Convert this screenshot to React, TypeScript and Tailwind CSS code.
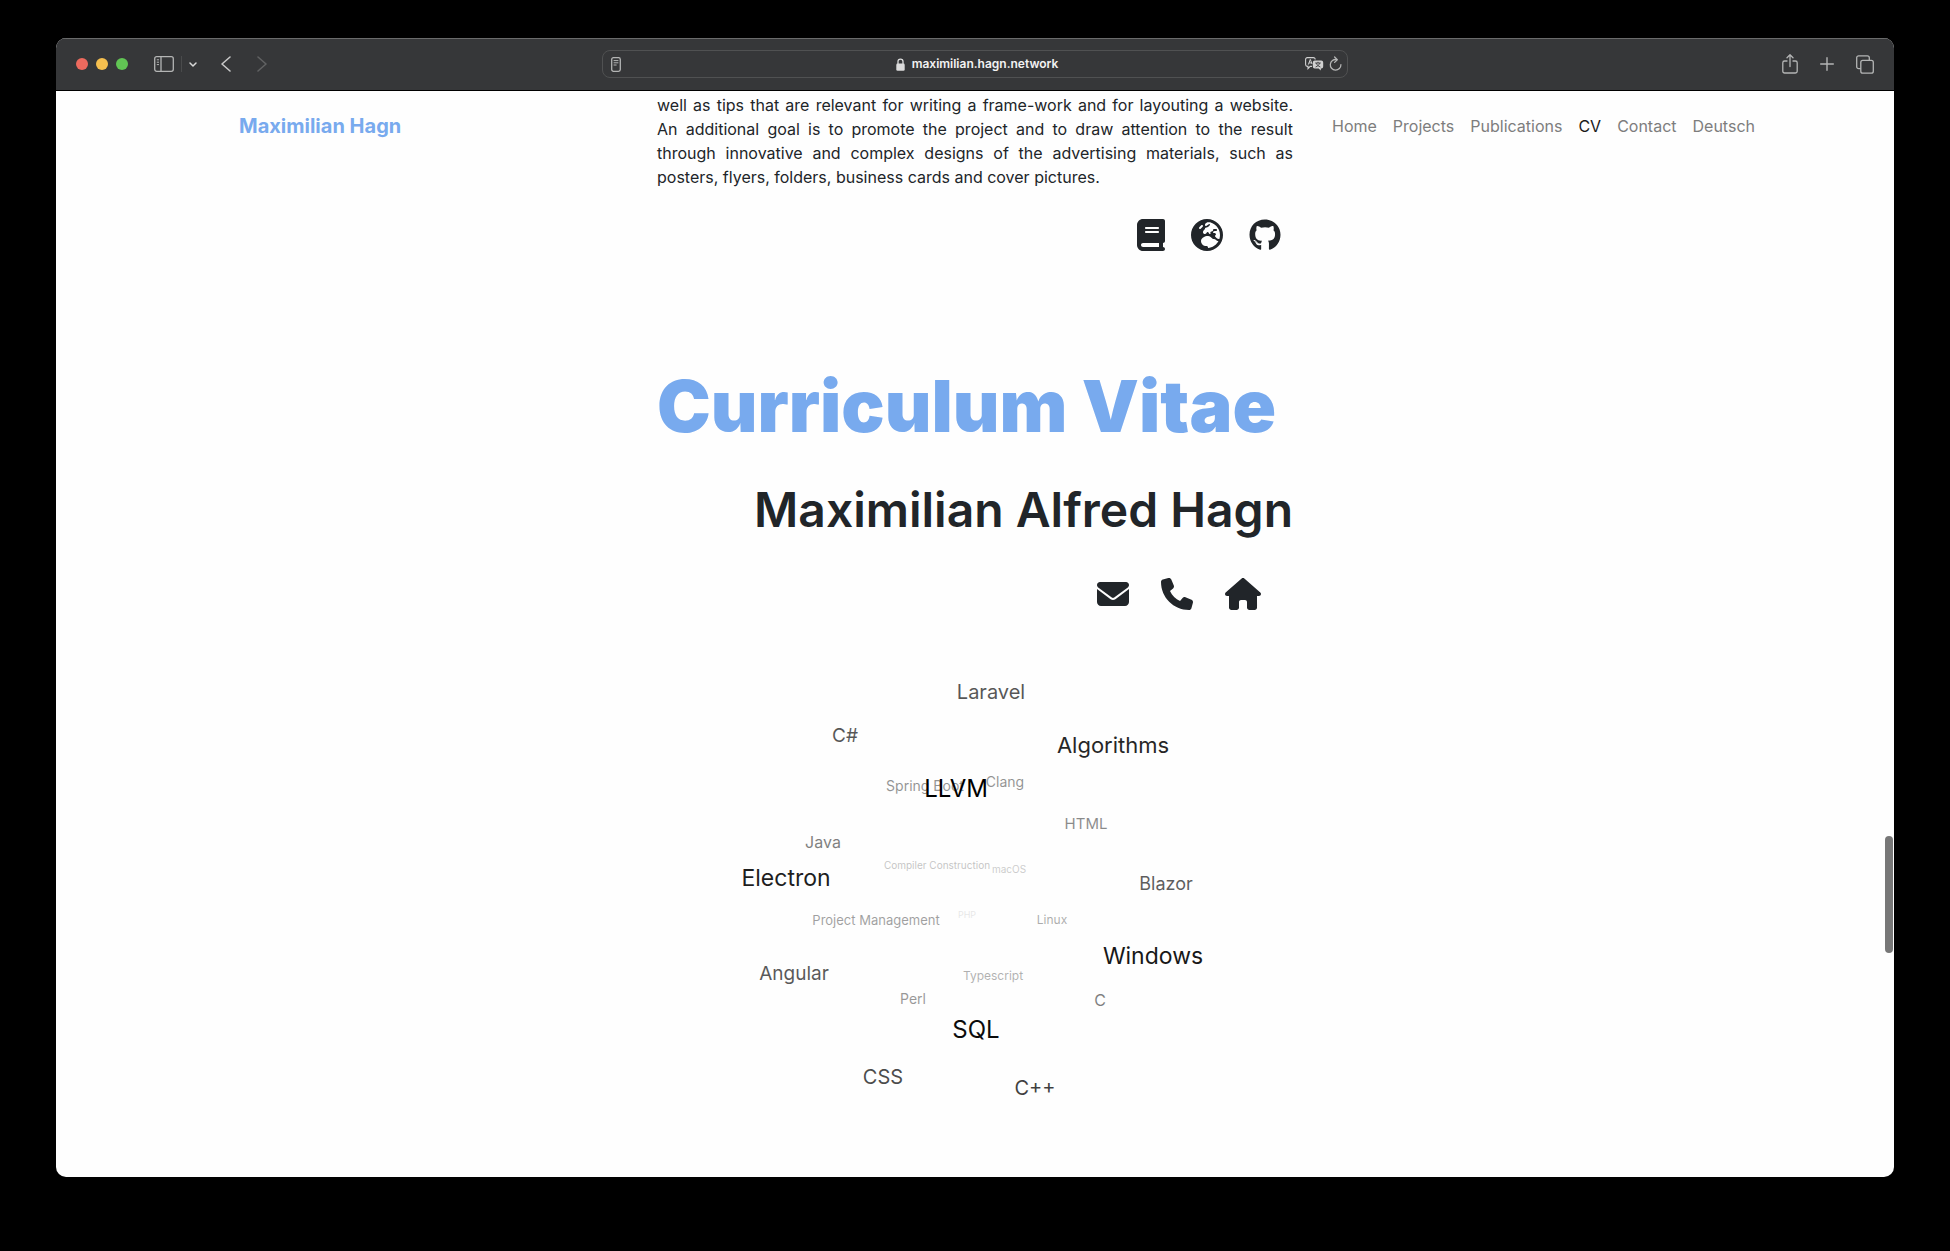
import React from "react";
import {
  FaBook,
  FaEarthEurope,
  FaEnvelope,
  FaGithub,
  FaHouse,
  FaPhone,
} from "react-icons/fa6";

type Skill = {
  name: string;
  x: number;
  y: number;
  size: number;
  opacity: number;
};

const skills: Skill[] = [
  { name: "PHP", x: 232, y: 263, size: 9, opacity: 0.09 },
  { name: "macOS", x: 274, y: 218, size: 10, opacity: 0.2 },
  { name: "Compiler Construction", x: 202, y: 214, size: 10, opacity: 0.23 },
  { name: "Linux", x: 317, y: 269, size: 12, opacity: 0.32 },
  { name: "Typescript", x: 258, y: 325, size: 12, opacity: 0.3 },
  { name: "Project Management", x: 141, y: 269, size: 13, opacity: 0.37 },
  { name: "Clang", x: 270, y: 131, size: 14, opacity: 0.42 },
  { name: "Perl", x: 178, y: 348, size: 14, opacity: 0.4 },
  { name: "Spring Boot", x: 190, y: 135, size: 14, opacity: 0.42 },
  { name: "HTML", x: 351, y: 172, size: 15, opacity: 0.45 },
  { name: "C", x: 365, y: 349, size: 16, opacity: 0.5 },
  { name: "Java", x: 88, y: 191, size: 16, opacity: 0.5 },
  { name: "Blazor", x: 431, y: 233, size: 18, opacity: 0.63 },
  { name: "Angular", x: 59, y: 322, size: 19, opacity: 0.65 },
  { name: "C#", x: 110, y: 84, size: 19, opacity: 0.66 },
  { name: "Laravel", x: 256, y: 41, size: 20, opacity: 0.66 },
  { name: "CSS", x: 148, y: 426, size: 20, opacity: 0.7 },
  { name: "C++", x: 300, y: 437, size: 20, opacity: 0.75 },
  { name: "Algorithms", x: 378, y: 94, size: 22, opacity: 0.85 },
  { name: "Electron", x: 51, y: 227, size: 23, opacity: 0.88 },
  { name: "Windows", x: 418, y: 305, size: 23, opacity: 0.9 },
  { name: "SQL", x: 241, y: 379, size: 24, opacity: 0.95 },
  { name: "LLVM", x: 221, y: 138, size: 24, opacity: 1 },
];

const navItems = ["Home", "Projects", "Publications", "CV", "Contact", "Deutsch"];

function SidebarIcon() {
  return (
    <svg width="20" height="16" viewBox="0 0 20 16" fill="none" stroke="currentColor" aria-hidden="true">
      <rect x="0.7" y="0.7" width="18.6" height="14.6" rx="2" strokeWidth="1.3" />
      <path d="M7 1v14" strokeWidth="1.3" />
      <path d="M2.8 3.8h2.2M2.8 6.2h2.2M2.8 8.6h2.2" strokeWidth="1" />
    </svg>
  );
}

function ReaderIcon() {
  return (
    <svg width="10" height="15" viewBox="0 0 10 15" fill="none" stroke="currentColor" aria-hidden="true">
      <rect x="0.7" y="0.7" width="8.6" height="13.6" rx="1.8" strokeWidth="1.3" />
      <path d="M2.6 3.6h4.8M2.6 5.8h4.8M2.6 8h3" strokeWidth="1" />
    </svg>
  );
}

function LockIcon() {
  return (
    <svg width="9" height="13" viewBox="0 0 9 13" aria-hidden="true">
      <path d="M2 6V3.6a2.5 2.5 0 0 1 5 0V6" fill="none" stroke="currentColor" strokeWidth="1.3" />
      <rect x="0.3" y="5.6" width="8.4" height="7.1" rx="1.3" fill="currentColor" />
    </svg>
  );
}

function TranslateIcon() {
  return (
    <svg width="19" height="14" viewBox="0 0 19 14" aria-hidden="true">
      <path
        d="M7 9.4H5.2L3 11.6V9.4H2.4A1.8 1.8 0 0 1 .6 7.6V2.4A1.8 1.8 0 0 1 2.4 .6h6A1.8 1.8 0 0 1 10.2 2.4"
        fill="none"
        stroke="currentColor"
        strokeWidth="1.1"
      />
      <path d="M3.3 7.6 5.3 2.4 7 7M4 5.9h2.6" fill="none" stroke="currentColor" strokeWidth="1" />
      <path
        d="M9.8 3.6h6.400a2 2 0 0 1 2 2v3.800a2 2 0 0 1-2 2h-.4v2.200l-2.200-2.200H9.800a2 2 0 0 1-2-2V5.600a2 2 0 0 1 2-2z"
        fill="currentColor"
      />
      <path
        d="M10.2 6h5.600M13 4.800V6M14.600 6.200c-.6 1.800-2 3-4 3.800M11.400 6.200c.6 1.800 2 3 4 3.800"
        fill="none"
        stroke="#363739"
        strokeWidth="0.9"
      />
    </svg>
  );
}

function ReloadIcon() {
  return (
    <svg
      width="13"
      height="16"
      viewBox="0 0 13 16"
      fill="none"
      stroke="currentColor"
      strokeWidth="1.3"
      strokeLinecap="round"
      strokeLinejoin="round"
      aria-hidden="true"
    >
      <path d="M11.9 8.600A5.300 5.300 0 1 1 7.600 3.600" />
      <path d="M5.600 1 8.300 3.700 5.600 6.400" />
    </svg>
  );
}

function ShareIcon() {
  return (
    <svg
      width="16"
      height="20"
      viewBox="0 0 16 20"
      fill="none"
      stroke="currentColor"
      strokeWidth="1.3"
      strokeLinecap="round"
      strokeLinejoin="round"
      aria-hidden="true"
    >
      <path d="M5 7H2.600A1.800 1.800 0 0 0 .8 8.800v8.400A1.800 1.800 0 0 0 2.600 19h10.800a1.800 1.800 0 0 0 1.800-1.800V8.800A1.800 1.800 0 0 0 13.400 7H11" />
      <path d="M8 12.500V1M5 3.800 8 .8l3 3" />
    </svg>
  );
}

function PlusIcon() {
  return (
    <svg width="14" height="14" viewBox="0 0 14 14" stroke="currentColor" strokeWidth="1.4" strokeLinecap="round" aria-hidden="true">
      <path d="M7 .7v12.600M.7 7h12.600" />
    </svg>
  );
}

function TabsIcon() {
  return (
    <svg width="18" height="19" viewBox="0 0 18 19" fill="none" stroke="currentColor" strokeWidth="1.3" aria-hidden="true">
      <rect x="4.800" y="5.400" width="12.500" height="12.800" rx="2" />
      <path d="M4.800 13.700H2.700a2 2 0 0 1-2-2V2.800a2 2 0 0 1 2-2h8.600a2 2 0 0 1 2 2v2.600" />
    </svg>
  );
}

function Chevron({ direction }: { direction: "left" | "right" }) {
  return (
    <svg
      width="10"
      height="16"
      viewBox="0 0 10 16"
      fill="none"
      stroke="currentColor"
      strokeWidth="1.6"
      strokeLinecap="round"
      strokeLinejoin="round"
      aria-hidden="true"
    >
      <path d={direction === "left" ? "M9 1 1 8l8 7" : "M1 1l8 7-8 7"} />
    </svg>
  );
}

function Toolbar() {
  return (
    <div className="flex h-[53px] shrink-0 items-center border-t border-b border-t-[#6a6b6b] border-b-black bg-[#363739] px-5 pb-px text-[#b4b5b5]">
      <div className="flex flex-1 items-center">
        <div className="flex gap-2">
          <button aria-label="Close window" className="size-3 rounded-full bg-[#ed6a5e]" />
          <button aria-label="Minimise window" className="size-3 rounded-full bg-[#f5bf4f]" />
          <button aria-label="Zoom window" className="size-3 rounded-full bg-[#61c554]" />
        </div>
        <button aria-label="Show sidebar" className="ml-[26px]">
          <SidebarIcon />
        </button>
        <span className="ml-[7px] h-4 w-px bg-[#4a4b4c]" />
        <button aria-label="Tab groups" className="ml-[7px] text-[#d8d8d8]">
          <svg width="8" height="5" viewBox="0 0 8 5" fill="none" stroke="currentColor" strokeWidth="1.5" strokeLinecap="round" strokeLinejoin="round" aria-hidden="true">
            <path d="M1 1l3 3 3-3" />
          </svg>
        </button>
        <button aria-label="Back" className="ml-6 text-[#c8c8c8]">
          <Chevron direction="left" />
        </button>
        <button aria-label="Forward" disabled className="ml-[26px] text-[#606162]">
          <Chevron direction="right" />
        </button>
      </div>
      <div className="flex h-7 w-[41.5%] items-center rounded-lg border border-[#505152] pr-[5px] pl-2">
        <button aria-label="Show reader">
          <ReaderIcon />
        </button>
        <div className="flex flex-1 items-center justify-center gap-[7px] pl-7 text-xs font-semibold text-[#f2f2f2]">
          <span className="text-[#dcdcdc]">
            <LockIcon />
          </span>
          <span>maximilian.hagn.network</span>
        </div>
        <button aria-label="Translate page" className="text-[#d0d0d0]">
          <TranslateIcon />
        </button>
        <button aria-label="Reload page" className="ml-[5px]">
          <ReloadIcon />
        </button>
      </div>
      <div className="flex flex-1 items-center justify-end gap-[22px]">
        <button aria-label="Share">
          <ShareIcon />
        </button>
        <button aria-label="New tab">
          <PlusIcon />
        </button>
        <button aria-label="Show all tabs">
          <TabsIcon />
        </button>
      </div>
    </div>
  );
}

function SiteHeader() {
  return (
    <header className="absolute inset-x-0 top-0 flex h-[70px] items-center justify-between pr-[139px] pl-[183px]">
      <a href="#top" className="text-xl font-bold text-[#78aaee]">
        Maximilian Hagn
      </a>
      <nav className="flex gap-4 text-base">
        {navItems.map((item) => (
          <a key={item} href={"#" + item.toLowerCase()} className={item === "CV" ? "text-[#1a1a1a]" : "text-[#7d7d7d]"}>
            {item}
          </a>
        ))}
      </nav>
    </header>
  );
}

function SkillCloud() {
  return (
    <ul className="relative mx-auto mt-[41px] h-[480px] w-[480px]" aria-label="Skills">
      {skills.map((skill) => (
        <li
          key={skill.name}
          className="absolute -translate-x-1/2 -translate-y-1/2 leading-none whitespace-nowrap text-black"
          style={{ left: skill.x, top: skill.y, fontSize: skill.size, opacity: skill.opacity }}
        >
          {skill.name}
        </li>
      ))}
    </ul>
  );
}

export default function App() {
  return (
    <div className="flex h-screen flex-col bg-black px-14 pt-[38px] pb-[74px] font-['Inter',sans-serif]">
      <div className="flex min-h-0 flex-1 flex-col overflow-hidden rounded-[10px] bg-[#fefefe]">
        <Toolbar />
        <div className="relative min-h-0 flex-1 overflow-hidden">
          <main className="mx-auto w-full max-w-[636px] pt-[2px] text-[#212529]">
            <p className="text-justify text-base leading-6">
              well as tips that are relevant for writing a frame-work and for layouting a website. An additional goal is
              to promote the project and to draw attention to the result through innovative and complex designs of the
              advertising materials, such as posters, flyers, folders, business cards and cover pictures.
            </p>
            <div className="mt-[30px] flex justify-end gap-[26px] pr-3 text-[32px]">
              <a href="#thesis" aria-label="Thesis">
                <FaBook className="w-7" />
              </a>
              <a href="#website" aria-label="Website">
                <FaEarthEurope />
              </a>
              <a href="#github" aria-label="GitHub">
                <FaGithub />
              </a>
            </div>
            <h1 className="mt-[115px] text-7xl leading-[80px] font-black whitespace-nowrap text-[#78aaee]">
              Curriculum Vitae
            </h1>
            <h2 className="mt-9 text-right text-5xl leading-[56px] font-semibold whitespace-nowrap">
              Maximilian Alfred Hagn
            </h2>
            <div className="mt-10 flex justify-end gap-8 pr-8 text-[32px]">
              <a href="#mail" aria-label="Mail">
                <FaEnvelope />
              </a>
              <a href="#phone" aria-label="Phone">
                <FaPhone />
              </a>
              <a href="#address" aria-label="Address">
                <FaHouse className="w-9" />
              </a>
            </div>
            <SkillCloud />
          </main>
          <SiteHeader />
          <div className="absolute top-[745px] right-px h-[117px] w-2 rounded-full bg-[#777777]" />
        </div>
      </div>
    </div>
  );
}
